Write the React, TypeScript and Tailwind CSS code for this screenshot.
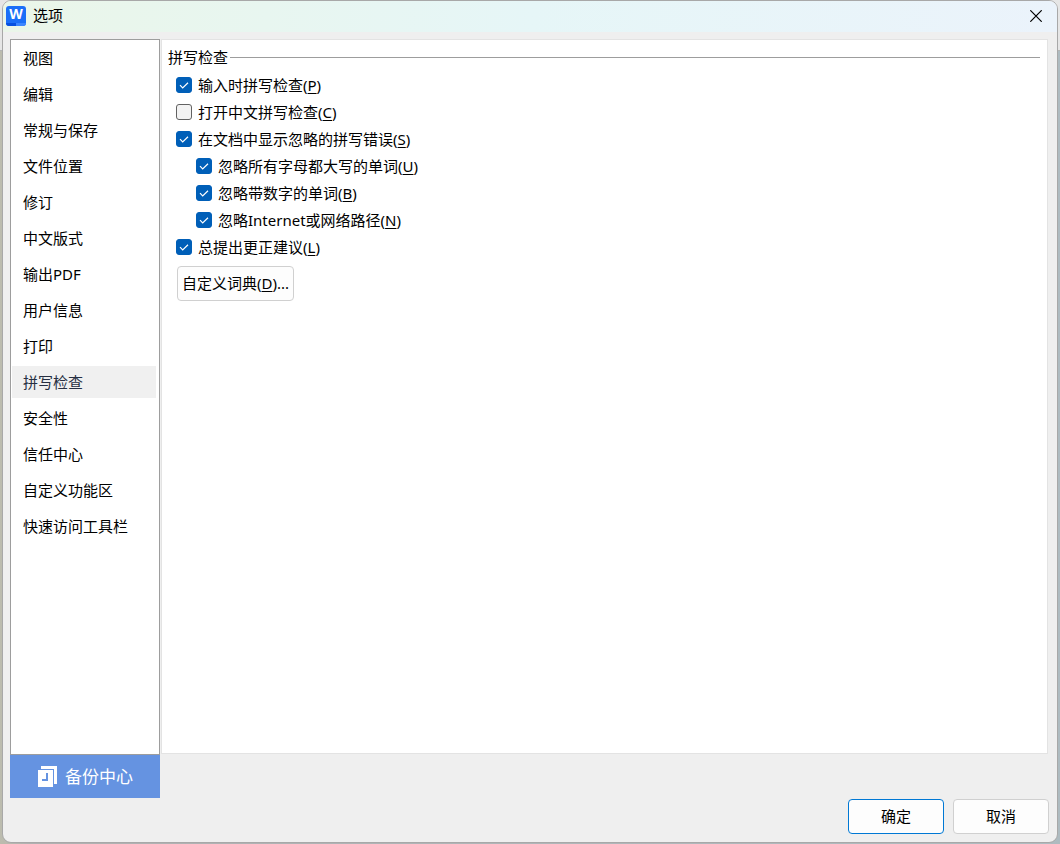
import React, { useState } from 'react';

const categories = [
  '视图',
  '编辑',
  '常规与保存',
  '文件位置',
  '修订',
  '中文版式',
  '输出PDF',
  '用户信息',
  '打印',
  '拼写检查',
  '安全性',
  '信任中心',
  '自定义功能区',
  '快速访问工具栏',
];

const spellingOptions = [
  { id: 'check-typing', label: '输入时拼写检查', hotkey: 'P', checked: true, nested: false },
  { id: 'check-chinese', label: '打开中文拼写检查', hotkey: 'C', checked: false, nested: false },
  { id: 'show-ignored', label: '在文档中显示忽略的拼写错误', hotkey: 'S', checked: true, nested: false },
  { id: 'ignore-upper', label: '忽略所有字母都大写的单词', hotkey: 'U', checked: true, nested: true },
  { id: 'ignore-digits', label: '忽略带数字的单词', hotkey: 'B', checked: true, nested: true },
  { id: 'ignore-paths', label: '忽略Internet或网络路径', hotkey: 'N', checked: true, nested: true },
  { id: 'suggest', label: '总提出更正建议', hotkey: 'L', checked: true, nested: false },
];

const Hotkey: React.FC<{ letter: string }> = ({ letter }) => (
  <>
    (<span className="underline underline-offset-2">{letter}</span>)
  </>
);

interface OptionProps {
  id: string;
  label: string;
  hotkey: string;
  checked: boolean;
  nested: boolean;
}

const Option: React.FC<OptionProps> = ({ id, label, hotkey, checked, nested }) => {
  const [on, setOn] = useState(checked);

  return (
    <div className={nested ? 'flex h-[27px] items-center pl-5' : 'flex h-[27px] items-center'}>
      <span className="relative flex h-4 w-4 shrink-0">
        <input
          id={id}
          type="checkbox"
          checked={on}
          onChange={(e) => setOn(e.target.checked)}
          className="h-4 w-4 appearance-none rounded-[3px] border border-[#626262] bg-[#f3f3f3] checked:border-[#005fb8] checked:bg-[#005fb8]"
        />
        {on && (
          <svg className="pointer-events-none absolute inset-0" viewBox="0 0 16 16" fill="none" stroke="#fff" strokeWidth="1.2">
            <path d="M4 8.200 6.700 10.900 12 5.700" />
          </svg>
        )}
      </span>
      <label htmlFor={id} className="pl-[6px] whitespace-nowrap">
        {label}
        <Hotkey letter={hotkey} />
      </label>
    </div>
  );
};

const TitleBar: React.FC = () => (
  <header className="flex h-[31px] shrink-0 items-center bg-linear-to-r from-[#eaf6e9] via-[#e6f6f7] to-[#ebf3fb] pr-[13px] pb-[2px] pl-[3px]">
    <span className="flex h-5 w-5 flex-col overflow-hidden rounded-[3px] bg-[#1b6ff8]">
      <span className="flex h-[17px] items-center justify-center font-['Noto_Sans',sans-serif] text-[14px] font-bold text-white">
        W
      </span>
      <span className="h-[3px] bg-linear-to-r from-[#0650e0] from-50% to-[#3c86ff] to-50%" />
    </span>
    <h1 className="flex-1 pb-px pl-[7px]">选项</h1>
    <button type="button" aria-label="关闭" className="flex h-4 w-4 items-center justify-center">
      <svg className="h-3 w-3" viewBox="0 0 12 12" stroke="#000" strokeWidth="1.2">
        <path d="M.3.3 11.7 11.7M11.7.3.3 11.7" />
      </svg>
    </button>
  </header>
);

export default function App() {
  const [active, setActive] = useState('拼写检查');

  return (
    <div className="flex min-h-screen bg-[linear-gradient(#e6e6e6_0_50px,#b4b4b4_50px_51px,transparent_51px),linear-gradient(to_right,#bcbcae,#b0b0b0_30px,#aebbc0)] px-[2px] pb-px font-['Noto_Sans','Noto_Sans_CJK_SC',sans-serif] text-[15px] leading-5 text-black">
      <div className="flex flex-1 flex-col overflow-hidden rounded-[9px] border border-[#a8a8a8] bg-[#efefef]">
        <TitleBar />

        <div className="flex flex-1 gap-px pt-[7px] pr-[9px] pl-[7px]">
          <nav className="flex w-[150px] shrink-0 flex-col gap-1 border border-[#9d9d9d] bg-white py-[2px] pr-[3px] pl-px">
            {categories.map((name) => (
              <button
                key={name}
                type="button"
                onClick={() => setActive(name)}
                className={
                  name === active
                    ? 'h-8 bg-[#f0f0f0] pl-[11px] text-left text-[#262f42]'
                    : 'h-8 pl-[11px] text-left'
                }
              >
                {name}
              </button>
            ))}
          </nav>

          <main className="mb-px min-w-0 flex-1 border border-[#e3e3e3] bg-white pt-[7px] pr-[7px] pl-[6px]">
            <div className="flex items-center gap-[2px]">
              <h2>拼写检查</h2>
              <span className="h-px flex-1 bg-[#9d9d9d]" />
            </div>
            <div className="flex flex-col items-start pt-1 pl-2">
              {spellingOptions.map((option) => (
                <Option key={option.id} {...option} />
              ))}
              <button
                type="button"
                className="mt-[6px] ml-px h-[35px] rounded-[4px] border border-[#d0d0d0] bg-[#fdfdfd] px-1 pb-[2px] whitespace-nowrap"
              >
                自定义词典
                <Hotkey letter="D" />
                ...
              </button>
            </div>
          </main>
        </div>

        <div className="flex pl-[7px]">
          <button
            type="button"
            className="flex h-[43px] w-[150px] items-center bg-[#6593e1] pl-7 text-[17px] text-white"
          >
            <svg className="h-[21px] w-[19px]" viewBox="0 0 19 21">
              <path fill="#fff" d="M3 0h16v18h-3V3H3z" />
              <path fill="#fff" d="M0 4h15v17H0z" />
              <path fill="none" stroke="#6593e1" strokeWidth="2" d="M9 7v7H4" />
            </svg>
            <span className="pl-2">备份中心</span>
          </button>
        </div>

        <footer className="flex justify-end gap-[9px] pt-px pr-2 pb-2">
          <button type="button" className="h-[35px] w-24 rounded-[4px] border border-[#0078d4] bg-[#fdfdfd] pb-[2px]">
            确定
          </button>
          <button type="button" className="h-[35px] w-24 rounded-[4px] border border-[#d0d0d0] bg-[#fdfdfd] pb-[2px]">
            取消
          </button>
        </footer>
      </div>
    </div>
  );
}
